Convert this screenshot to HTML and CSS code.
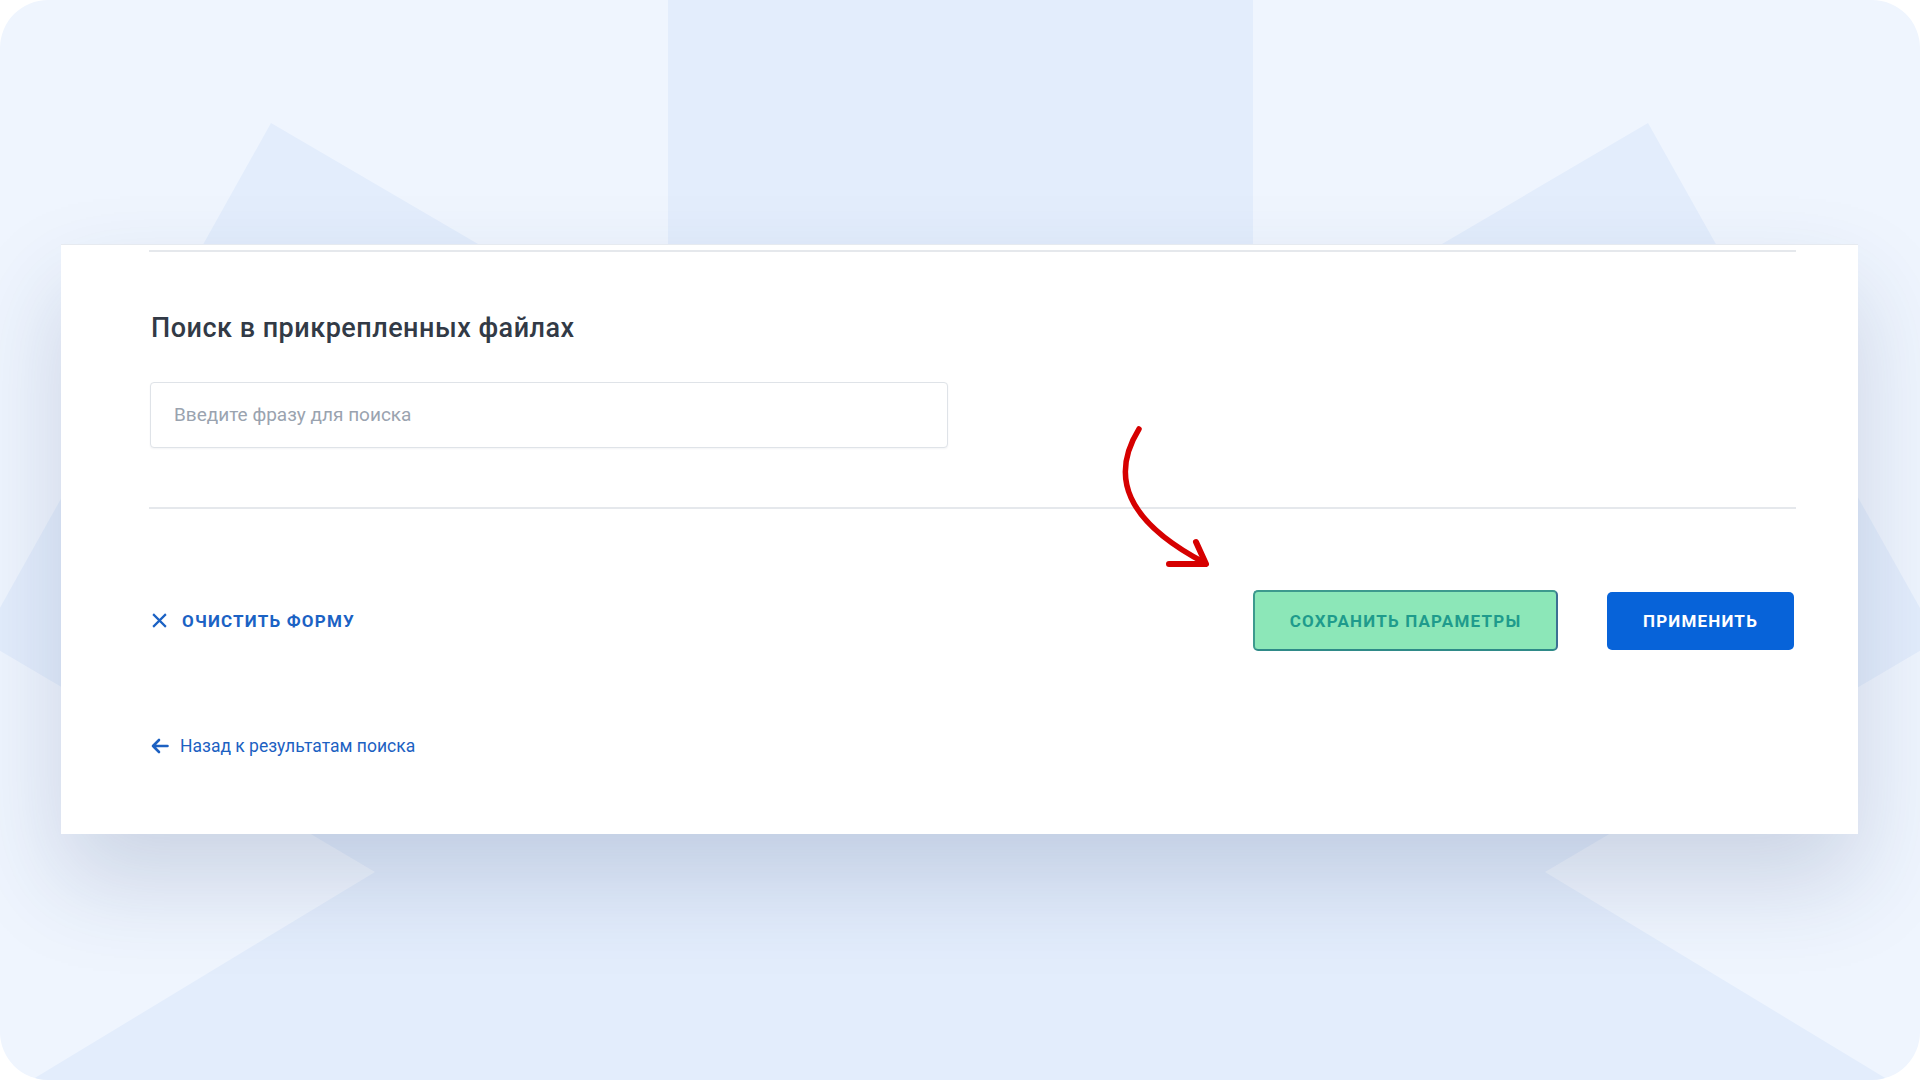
FILE: index.html
```html
<!DOCTYPE html>
<html lang="ru">
<head>
<meta charset="utf-8">
<title>Поиск в прикрепленных файлах</title>
<link rel="stylesheet" href="styles.css">
</head>
<body>
<div class="frame">
  <svg class="backdrop" viewBox="0 0 1920 1080" preserveAspectRatio="none" aria-hidden="true">
    <path class="backdrop-shape" d="M668,0 L1253,0 L1253,355 L1648,123 L1938,640 L1545,872 L1905,1090 L15,1090 L375,872 L-18,640 L271,123 L668,355 Z"/>
  </svg>
  <main class="card">
    <hr class="divider divider-top">
    <section class="search-section">
      <h2 class="section-title">Поиск в прикрепленных файлах</h2>
      <input class="search-input" type="text" placeholder="Введите фразу для поиска">
    </section>
    <hr class="divider divider-bottom">
    <div class="actions">
      <button class="btn-clear" type="button">
        <svg class="icon-x" viewBox="0 0 16 16" aria-hidden="true"><path d="M2 2 L14 14 M14 2 L2 14"/></svg>
        <span>Очистить форму</span>
      </button>
      <div class="actions-right">
        <button class="btn btn-save" type="button">Сохранить параметры</button>
        <button class="btn btn-apply" type="button">Применить</button>
      </div>
    </div>
    <a class="back-link" href="#">
      <svg class="icon-back" viewBox="0 0 18 16" aria-hidden="true"><path d="M17 8 H2.5 M8.5 2 L2.5 8 L8.5 14"/></svg>
      <span>Назад к результатам поиска</span>
    </a>
    <svg class="annotation" viewBox="0 0 1797 590" aria-hidden="true">
      <path class="annotation-line" d="M1078,184 C1049,231 1064,276 1144,318"/>
      <path class="annotation-head" d="M1135,297 L1145,319 L1108,319"/>
    </svg>
  </main>
</div>
</body>
</html>
```
FILE: styles.css
```css
* { box-sizing: border-box; }
html, body { margin: 0; padding: 0; background: #ffffff; }
body { width: 1920px; height: 1080px; overflow: hidden; font-family: Roboto, "Noto Sans", "Liberation Sans", sans-serif; }

.frame {
  position: relative;
  width: 1920px;
  height: 1080px;
  border-radius: 48px;
  overflow: hidden;
  background: #eff5fe;
  padding: 244px 0 0 61px;
}

.backdrop {
  position: absolute;
  left: 0; top: 0;
  width: 1920px; height: 1080px;
  z-index: 0;
}
.backdrop-shape { fill: #e3edfc; }

.card {
  position: relative;
  z-index: 1;
  width: 1797px;
  height: 590px;
  background: #ffffff;
  border-top: 1px solid #e6eaf0;
  padding: 5px 62px 0 88px;
  box-shadow: 0 46px 90px rgba(40, 62, 110, 0.18);
  display: flex;
  flex-direction: column;
  align-items: flex-start;
}

.divider {
  width: 100%;
  height: 2px;
  margin: 0;
  border: none;
  background: #e5e8ec;
}
.divider-bottom { margin-top: 59px; }

.search-section { display: flex; flex-direction: column; width: 100%; }

.section-title {
  margin: 61px 0 0 2px;
  font-size: 27px;
  line-height: 30px;
  font-weight: 500;
  color: #323a46;
  letter-spacing: 0.5px;
}

.search-input {
  margin: 39px 0 0 1px;
  width: 798px;
  height: 66px;
  border: 1px solid #dfe3e8;
  border-radius: 4px;
  padding: 0 0 2px 23px;
  font-family: Roboto, "Noto Sans", "Liberation Sans", sans-serif;
  font-size: 19px;
  color: #333a45;
  background: #fff;
  box-shadow: 0 1px 2px rgba(20, 40, 80, 0.05);
  outline: none;
}
.search-input::placeholder { color: #9aa3af; }

.actions {
  margin-top: 81px;
  width: 100%;
  height: 61px;
  display: flex;
  align-items: center;
}

.btn-clear {
  display: flex;
  align-items: center;
  gap: 14px;
  margin-left: 2px;
  padding: 0;
  border: none;
  background: none;
  font-family: Roboto, "Noto Sans", "Liberation Sans", sans-serif;
  font-size: 17px;
  font-weight: 700;
  letter-spacing: 1.2px;
  text-transform: uppercase;
  color: #1b62c4;
}
.icon-x { width: 17px; height: 17px; fill: none; stroke: #1b62c4; stroke-width: 2; }

.actions-right {
  margin-left: auto;
  margin-right: 2px;
  display: flex;
  align-items: center;
  gap: 49px;
}

.btn {
  font-family: Roboto, "Noto Sans", "Liberation Sans", sans-serif;
  font-size: 17px;
  font-weight: 700;
  letter-spacing: 1.2px;
  text-transform: uppercase;
  border-radius: 5px;
  padding: 0;
  display: flex;
  align-items: center;
  justify-content: center;
}
.btn-save {
  width: 305px;
  height: 61px;
  background: #8ce7b8;
  color: #1f9b8c;
  border: 2px solid #3d9a8e;
  border-right-color: #3c6f93;
  border-bottom-color: #2f8a88;
}
.btn-apply {
  width: 187px;
  height: 58px;
  background: #0763d9;
  color: #ffffff;
  border: none;
}

.back-link {
  margin-top: 84px;
  margin-left: 1px;
  display: flex;
  align-items: center;
  gap: 11px;
  font-size: 17.5px;
  line-height: 22px;
  color: #1c61c2;
  text-decoration: none;
}
.icon-back { width: 19px; height: 16px; fill: none; stroke: #1c61c2; stroke-width: 2.6; stroke-linecap: round; stroke-linejoin: round; }

.annotation {
  position: absolute;
  left: 0; top: 0;
  width: 1797px; height: 590px;
  pointer-events: none;
  overflow: visible;
}
.annotation-line { fill: none; stroke: #d60000; stroke-width: 5.5; stroke-linecap: round; }
.annotation-head { fill: none; stroke: #d60000; stroke-width: 6; stroke-linecap: round; stroke-linejoin: round; }
```
